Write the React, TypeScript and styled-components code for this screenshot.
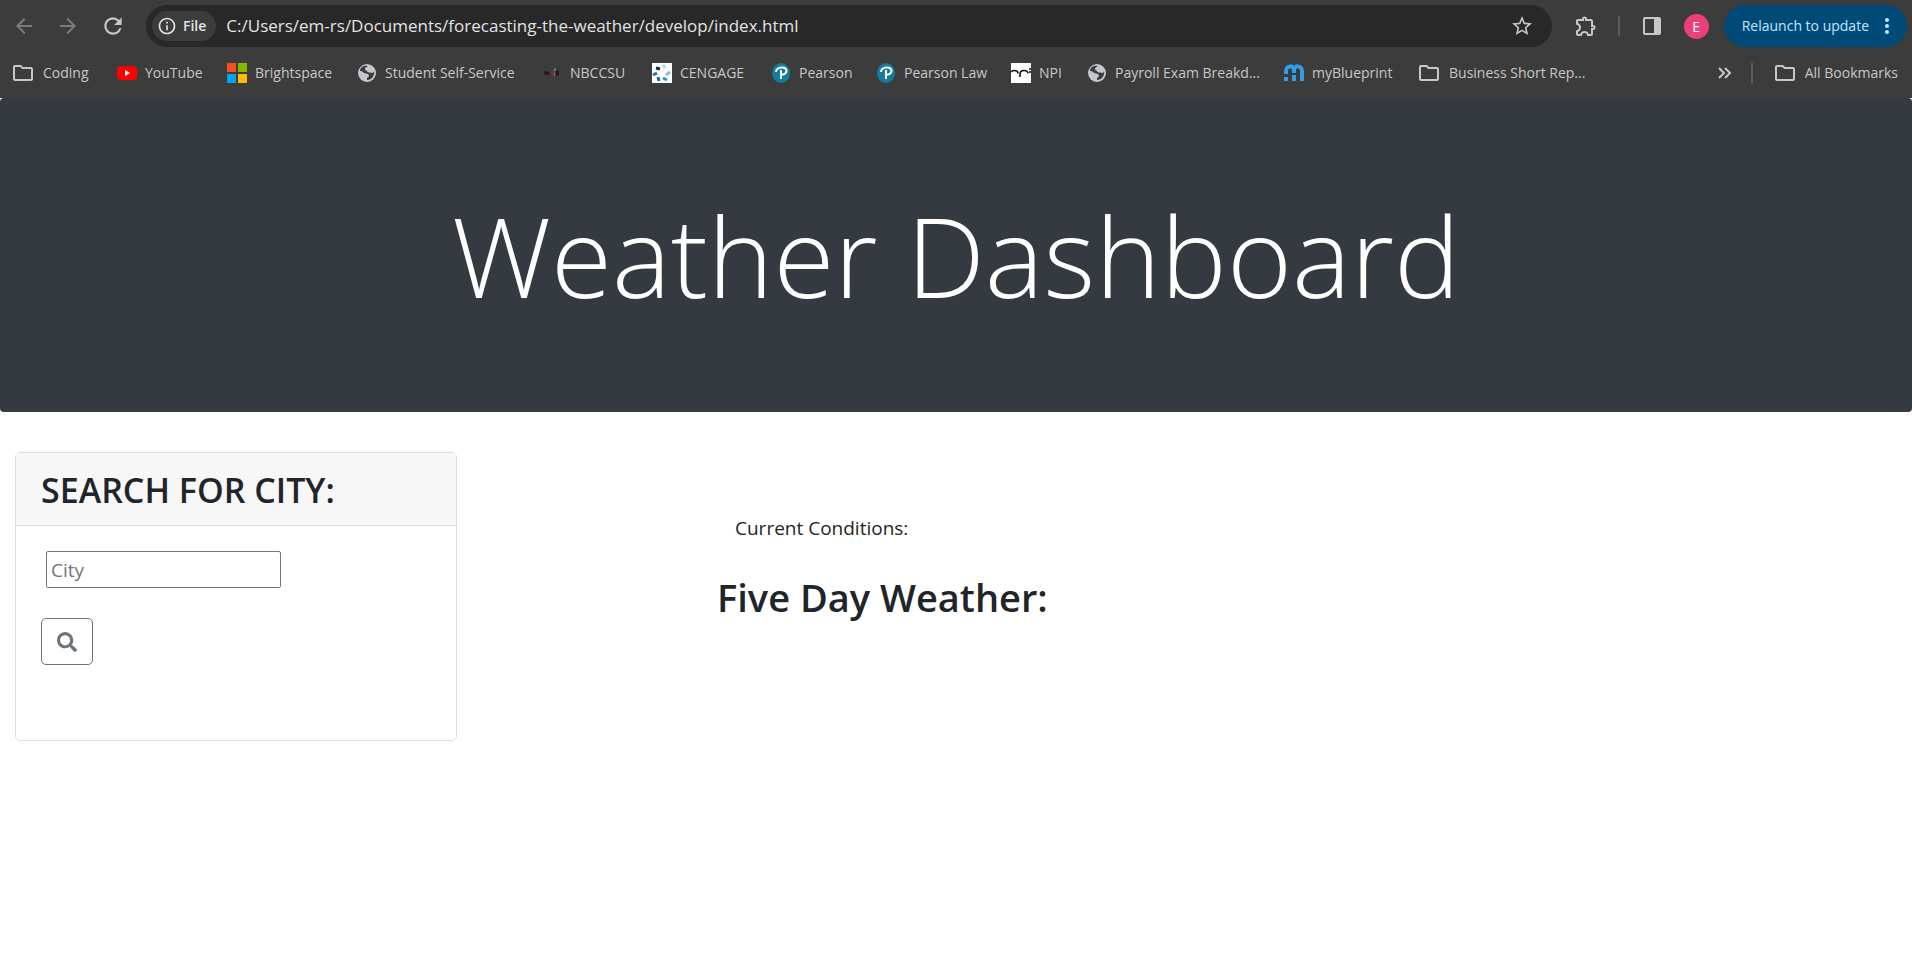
import React from "react";
import styled, { createGlobalStyle } from "styled-components";
import {
  MdArrowBack,
  MdArrowForward,
  MdInfoOutline,
  MdMoreVert,
  MdOutlineExtension,
  MdOutlineFolder,
  MdRefresh,
  MdStarOutline,
} from "react-icons/md";
import { FaSearch } from "react-icons/fa";

const GlobalStyle = createGlobalStyle`
  *, *::before, *::after { box-sizing: border-box; }
  body {
    margin: 0;
    background: #fff;
    color: #212529;
    font-family: "Open Sans", "Noto Sans", sans-serif;
    font-size: 19px;
    line-height: 30px;
  }
  button, input { font: inherit; }
`;

const Chrome = styled.header`
  background: #3c3c3c;
  color: #c7c7c7;
  font-size: 14px;
  line-height: 20px;
`;

const Toolbar = styled.div`
  display: flex;
  align-items: center;
  padding: 5px 5px 4px 12px;
`;

const IconButton = styled.button<{ $dim?: boolean; $space: number }>`
  display: flex;
  flex: none;
  padding: 0;
  margin-right: ${(p) => p.$space}px;
  border: 0;
  background: none;
  color: ${(p) => (p.$dim ? "#7c7c7c" : "#c7c7c7")};
`;

const AddressBar = styled.div`
  display: flex;
  flex: 1;
  align-items: center;
  gap: 10px;
  height: 42px;
  margin-right: 22px;
  padding: 0 18px 0 6px;
  border-radius: 21px;
  background: #282828;
`;

const SchemeChip = styled.button`
  display: flex;
  align-items: center;
  gap: 6px;
  height: 30px;
  padding: 0 10px 0 5px;
  border: 0;
  border-radius: 15px;
  background: #3c3c3c;
  color: #e3e3e3;
  font-size: 14px;
  font-weight: 600;
`;

const Address = styled.input`
  flex: 1;
  min-width: 0;
  padding: 0;
  border: 0;
  outline: 0;
  background: none;
  color: #e3e3e3;
  font-size: 17px;
`;

const Divider = styled.span<{ $space: number }>`
  width: 2px;
  height: 20px;
  margin-right: ${(p) => p.$space}px;
  background: #5c5c5c;
`;

const Avatar = styled.button`
  width: 25px;
  height: 25px;
  margin-right: 15px;
  padding: 0;
  border: 0;
  border-radius: 50%;
  background: #ec407a;
  color: #fff;
  font-size: 14px;
  line-height: 25px;
`;

const Relaunch = styled.button`
  display: flex;
  align-items: center;
  gap: 6px;
  height: 42px;
  padding: 0 8px 0 18px;
  border: 0;
  border-radius: 21px;
  background: #004a77;
  color: #c2e7ff;
  font-size: 14px;
`;

const Bookmarks = styled.nav`
  display: flex;
  align-items: center;
  height: 47px;
  padding: 0 14px 4px 11px;
`;

const Bookmark = styled.a<{ $width?: number }>`
  display: flex;
  flex: none;
  align-items: center;
  gap: 8px;
  width: ${(p) => (p.$width ? `${p.$width}px` : "auto")};
  color: inherit;
  text-decoration: none;
  white-space: nowrap;

  svg { flex: none; }
`;

const Overflow = styled.div`
  display: flex;
  flex: none;
  align-items: center;
  margin-left: auto;
`;

const Jumbotron = styled.section`
  padding: 80px 40px;
  margin-bottom: 40px;
  border-radius: 4px;
  background: #343a40;
  color: #fff;
  text-align: center;
`;

const Title = styled.h1`
  margin: 0;
  font-size: 111px;
  font-weight: 300;
  line-height: 154px;
`;

const Columns = styled.main`
  display: flex;
  align-items: flex-start;
`;

const SearchCard = styled.section`
  width: calc(25% - 36px);
  min-height: 289px;
  margin-left: 15px;
  border: 1px solid #dfdfdf;
  border-radius: 5px;
`;

const CardHeader = styled.div`
  padding: 16px 25px 14px;
  border-bottom: 1px solid #dfdfdf;
  background: #f7f7f7;
`;

const CardTitle = styled.h3`
  margin: 0;
  font-size: 34px;
  font-weight: 600;
  line-height: 42px;
`;

const SearchForm = styled.form`
  display: flex;
  flex-direction: column;
  align-items: flex-start;
  gap: 30px;
  padding: 25px;
`;

const CityInput = styled.input`
  width: 235px;
  height: 37px;
  margin-left: 5px;
  padding: 1px 4px;
  border: 1px solid #767676;
  border-radius: 2px;
  color: #212529;

  &::placeholder { color: #757575; }
`;

const SearchButton = styled.button`
  display: flex;
  align-items: center;
  justify-content: center;
  width: 52px;
  height: 47px;
  padding: 0;
  border: 1px solid #6c757d;
  border-radius: 5px;
  background: transparent;
  color: #6c757d;
`;

const Forecast = styled.section`
  width: 50%;
  margin-left: calc(12.5% + 21px);
  padding-top: 61px;
`;

const Conditions = styled.p`
  margin: 0 0 30px;
  padding: 0 18px;
`;

const ForecastTitle = styled.h2`
  margin: 0;
  font-size: 38px;
  font-weight: 600;
  line-height: 48px;
`;

const YouTubeIcon = () => (
  <svg width="20" height="20" viewBox="0 0 20 20">
    <rect y="3" width="20" height="14" rx="4" fill="#f00" />
    <path d="M8 7l5 3-5 3z" fill="#fff" />
  </svg>
);

const MicrosoftIcon = () => (
  <svg width="20" height="20" viewBox="0 0 20 20">
    <path d="M0 0h9v9H0z" fill="#f25022" />
    <path d="M11 0h9v9h-9z" fill="#7fba00" />
    <path d="M0 11h9v9H0z" fill="#00a4ef" />
    <path d="M11 11h9v9h-9z" fill="#ffb900" />
  </svg>
);

const UnionIcon = () => (
  <svg width="20" height="20" viewBox="0 0 20 20">
    <path d="M2 8l3 1 1-1 2 2-1 2H4L2 11z" fill="#1d1d1d" />
    <path d="M9 8l2-1v6l-2-2z" fill="#6b3434" />
    <path d="M11 8l3-4v4z" fill="#3c9a5f" />
    <path d="M11 10l2 5V9z" fill="#b8404f" />
    <path d="M14 7l3 1v4l-3 1z" fill="#1d1d1d" />
  </svg>
);

const CengageIcon = () => (
  <svg width="20" height="20" viewBox="0 0 20 20">
    <path d="M0 0h20v20H0z" fill="#fff" />
    <g strokeWidth="3">
      <path d="M4 5l4 1" stroke="#0b2a4a" />
      <path d="M11 2l2 3" stroke="#a6dcf4" />
      <path d="M14 12l4-3" stroke="#7cc3ea" />
      <path d="M1 12l4-2" stroke="#2b6ea8" />
      <path d="M6 14l1 4" stroke="#17649c" />
      <path d="M11 15l4 2" stroke="#3b8fc4" />
    </g>
  </svg>
);

const PearsonIcon = () => (
  <svg width="20" height="20" viewBox="0 0 20 20">
    <ellipse cx="10" cy="10" rx="9" ry="10" fill="#147c9f" />
    <path
      d="M5 9c0-3 3-4.500 6-4.500 3 0 4.500 1.500 4.500 3.500 0 2.500-3 4-5.500 3.500M10 7v9"
      fill="none"
      stroke="#fff"
      strokeWidth="2"
    />
  </svg>
);

const NpiIcon = () => (
  <svg width="20" height="20" viewBox="0 0 20 20">
    <path d="M0 0h20v20H0z" fill="#fff" />
    <path
      d="M0 9c1-1 2-1.500 3-1.500 2.500 0 4 1 4 3M9 14v-3c0-2.500 2-3.500 4-3.500 2.500 0 4 1 4 3M19 8v2"
      fill="none"
      stroke="#111"
      strokeWidth="1.600"
    />
    <circle cx="19" cy="6" r="1" fill="#111" />
  </svg>
);

const BlueprintIcon = () => (
  <svg width="20" height="20" viewBox="0 0 20 20">
    <path
      d="M2 11V8c0-6 8-6 8-1 0-5 8-5 8 1v10M10 7v3"
      fill="none"
      stroke="#2f9fe8"
      strokeWidth="4"
    />
    <path d="M0 14h4v4H0zM8 12h4v6H8z" fill="#2f9fe8" />
  </svg>
);

const ChevronsIcon = () => (
  <svg width="14" height="14" viewBox="0 0 14 14" fill="none" stroke="#c7c7c7" strokeWidth="2">
    <path d="M2 2l5 5-5 5M8 2l5 5-5 5" />
  </svg>
);

const SidePanelIcon = () => (
  <svg width="20" height="20" viewBox="0 0 20 20">
    <rect x="2" y="2" width="16" height="16" rx="1" fill="none" stroke="#c7c7c7" strokeWidth="2" />
    <path d="M12 2h6v16h-6z" fill="#c7c7c7" />
  </svg>
);

const Folder = () => <MdOutlineFolder size={24} />;

const Globe = () => (
  <svg width="20" height="20" viewBox="0 0 20 20">
    <circle cx="10" cy="10" r="9" fill="#c4c7cc" />
    <path
      d="M11 3c-1 1-3 1-3 3 0 2 2 1 2 2 0 2 3 1 5 2 1 0 2-1 2-2 1 4-2 9-7 9v-2c1-1 2-1 2-3-1-2-5-1-6-3-1-1-2-1-3-1 0-3 3-6 8-5z"
      fill="#3c3c3c"
    />
  </svg>
);

const bookmarks = [
  { label: "Coding", Icon: Folder, width: 106 },
  { label: "YouTube", Icon: YouTubeIcon, width: 110 },
  { label: "Brightspace", Icon: MicrosoftIcon, width: 130 },
  { label: "Student Self-Service", Icon: Globe, width: 185 },
  { label: "NBCCSU", Icon: UnionIcon, width: 110 },
  { label: "CENGAGE", Icon: CengageIcon, width: 119 },
  { label: "Pearson", Icon: PearsonIcon, width: 105 },
  { label: "Pearson Law", Icon: PearsonIcon, width: 135 },
  { label: "NPI", Icon: NpiIcon, width: 76 },
  { label: "Payroll Exam Breakd...", Icon: Globe, width: 197 },
  { label: "myBlueprint", Icon: BlueprintIcon, width: 133 },
  { label: "Business Short Rep...", Icon: Folder, width: 180 },
];

export default function App() {
  return (
    <>
      <GlobalStyle />
      <Chrome>
        <Toolbar>
          <IconButton $dim $space={20} aria-label="Back"><MdArrowBack size={24} /></IconButton>
          <IconButton $dim $space={20} aria-label="Forward"><MdArrowForward size={24} /></IconButton>
          <IconButton $space={20} aria-label="Reload"><MdRefresh size={26} /></IconButton>
          <AddressBar>
            <SchemeChip><MdInfoOutline size={20} />File</SchemeChip>
            <Address
              aria-label="Address"
              defaultValue="C:/Users/em-rs/Documents/forecasting-the-weather/develop/index.html"
            />
            <IconButton $space={0} aria-label="Bookmark this page"><MdStarOutline size={24} /></IconButton>
          </AddressBar>
          <IconButton $space={20} aria-label="Extensions"><MdOutlineExtension size={24} /></IconButton>
          <Divider $space={22} />
          <IconButton $space={22} aria-label="Side panel"><SidePanelIcon /></IconButton>
          <Avatar aria-label="Profile">E</Avatar>
          <Relaunch>Relaunch to update<MdMoreVert size={24} /></Relaunch>
        </Toolbar>
        <Bookmarks aria-label="Bookmarks">
          {bookmarks.map(({ label, Icon, width }) => (
            <Bookmark key={label} href="#" $width={width}><Icon />{label}</Bookmark>
          ))}
          <Overflow>
            <IconButton $space={20} aria-label="More bookmarks"><ChevronsIcon /></IconButton>
            <Divider $space={20} />
            <Bookmark href="#"><Folder />All Bookmarks</Bookmark>
          </Overflow>
        </Bookmarks>
      </Chrome>
      <Jumbotron>
        <Title>Weather Dashboard</Title>
      </Jumbotron>
      <Columns>
        <SearchCard>
          <CardHeader>
            <CardTitle>SEARCH FOR CITY:</CardTitle>
          </CardHeader>
          <SearchForm onSubmit={(e) => e.preventDefault()}>
            <CityInput type="text" placeholder="City" aria-label="City" />
            <SearchButton type="submit" aria-label="Search"><FaSearch size={20} /></SearchButton>
          </SearchForm>
        </SearchCard>
        <Forecast>
          <Conditions>Current Conditions:</Conditions>
          <ForecastTitle>Five Day Weather:</ForecastTitle>
        </Forecast>
      </Columns>
    </>
  );
}
